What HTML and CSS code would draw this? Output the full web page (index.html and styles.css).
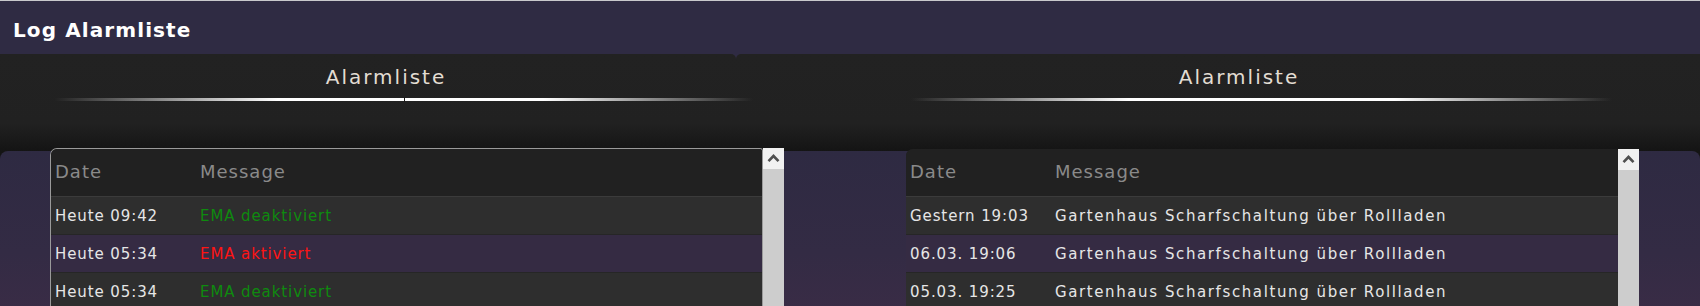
FILE: index.html
```html
<!DOCTYPE html>
<html lang="de">
<head>
<meta charset="utf-8">
<title>Log Alarmliste</title>
<link rel="stylesheet" href="styles.css">
</head>
<body>
<div class="page">
  <header class="topbar"><h1>Log Alarmliste</h1></header>
  <div class="heads">
    <section class="head head-left">
      <h2>Alarmliste</h2>
      <div class="rule rule-left"></div>
    </section>
    <section class="head head-right">
      <h2>Alarmliste</h2>
      <div class="rule rule-right"></div>
    </section>
  </div>
  <div class="lists-wrap">
    <div class="lists">
      <div class="list list-left">
        <div class="table table-bordered">
          <div class="row row-head"><div class="cell">Date</div><div class="cell">Message</div></div>
          <div class="row row-odd"><div class="cell">Heute 09:42</div><div class="cell ok">EMA deaktiviert</div></div>
          <div class="row row-even"><div class="cell">Heute 05:34</div><div class="cell alarm">EMA aktiviert</div></div>
          <div class="row row-odd"><div class="cell">Heute 05:34</div><div class="cell ok">EMA deaktiviert</div></div>
        </div>
        <div class="scroll">
          <div class="scroll-up">
            <svg width="21" height="21" viewBox="0 0 21 21"><polyline points="5.5,13.2 10.5,8 15.5,13.2" fill="none" stroke="#505050" stroke-width="2.6"/></svg>
          </div>
        </div>
      </div>
      <div class="list list-right">
        <div class="table">
          <div class="row row-head"><div class="cell">Date</div><div class="cell">Message</div></div>
          <div class="row row-odd"><div class="cell">Gestern 19:03</div><div class="cell msg">Gartenhaus Scharfschaltung über Rollladen</div></div>
          <div class="row row-even"><div class="cell">06.03. 19:06</div><div class="cell msg">Gartenhaus Scharfschaltung über Rollladen</div></div>
          <div class="row row-odd"><div class="cell">05.03. 19:25</div><div class="cell msg">Gartenhaus Scharfschaltung über Rollladen</div></div>
        </div>
        <div class="scroll">
          <div class="scroll-up">
            <svg width="21" height="21" viewBox="0 0 21 21"><polyline points="5.5,13.2 10.5,8 15.5,13.2" fill="none" stroke="#505050" stroke-width="2.6"/></svg>
          </div>
        </div>
      </div>
    </div>
  </div>
</div>
</body>
</html>
```
FILE: styles.css
```css
html, body {
  margin: 0;
  padding: 0;
}
body {
  width: 1700px;
  height: 306px;
  overflow: hidden;
  background: #2f2b43;
  font-family: "DejaVu Sans", Verdana, sans-serif;
}
.page {
  border-top: 1px solid #c9c9cc;
  height: 305px;
  display: flex;
  flex-direction: column;
}
.topbar {
  flex: 0 0 53px;
  height: 53px;
  background: #2f2b43;
  box-sizing: border-box;
  padding: 6px 0 0 13px;
}
.topbar h1 {
  margin: 0;
  font-size: 20px;
  line-height: 47px;
  font-weight: bold;
  color: #ffffff;
  letter-spacing: 1.1px;
}
.heads {
  display: flex;
  flex: 0 0 97px;
  height: 97px;
}
.head {
  background: linear-gradient(to bottom, #222222 0%, #212121 72%, #141414 100%);
  box-sizing: border-box;
  padding-top: 11px;
}
.head-left {
  width: 736px;
  border-radius: 0 5px 0 0;
  padding-left: 36px;
}
.head-right {
  flex: 1;
  border-radius: 5px 0 0 0;
  padding-left: 42px;
}
.head h2 {
  margin: 0;
  font-size: 20px;
  line-height: 24px;
  font-weight: normal;
  letter-spacing: 2px;
  color: #e3ddd3;
  text-align: center;
}
.rule {
  height: 3px;
  margin-top: 9px;
  position: relative;
}
.rule-left {
  margin-left: 18px;
  width: 699px;
  background: linear-gradient(to right, rgba(255,255,255,0) 0%, #ffffff 32%, #ffffff 70%, rgba(255,255,255,0) 100%);
}
.rule-left::after {
  content: "";
  position: absolute;
  left: 350px;
  top: -1px;
  width: 1px;
  height: 5px;
  background: #1a1a1a;
}
.rule-right {
  margin-left: 133px;
  width: 701px;
  background: linear-gradient(to right, rgba(255,255,255,0) 0%, #ffffff 31%, #ffffff 69%, rgba(255,255,255,0) 100%);
}
.lists-wrap {
  flex: 1 1 auto;
  min-height: 0;
  background: #141414;
  display: flex;
  flex-direction: column;
}
.lists {
  flex: 1;
  border-radius: 8px 8px 0 0;
  background: linear-gradient(to bottom, #2e2a42 0%, #332b44 60%, #3a2c46 100%);
  display: flex;
  padding-left: 50px;
  align-items: flex-start;
}
.list {
  display: flex;
  align-items: stretch;
  height: 170px;
  flex-shrink: 0;
}
.list-left {
  margin-top: -3px;
}
.list-right {
  margin-top: -2px;
  margin-left: 122px;
}
.table {
  background: #212121;
  overflow: hidden;
  border-radius: 7px 3px 0 0;
}
.table-bordered {
  width: 713px;
  box-sizing: border-box;
  border: 1px solid #9a9a9a;
  border-bottom: none;
}
.list-right .table {
  width: 712px;
}
.row {
  display: grid;
  grid-template-columns: 145px 1fr;
  align-items: center;
}
.cell {
  padding-left: 4px;
  white-space: nowrap;
}
.row-head {
  height: 48px;
  box-sizing: border-box;
  padding-bottom: 3px;
  border-bottom: 1px solid #3b3b3b;
  background: #212121;
  font-size: 18px;
  color: #8a8a8a;
  letter-spacing: 1px;
}
.row-odd, .row-even {
  height: 37px;
  border-bottom: 1px solid #262626;
  font-size: 15px;
  color: #e6e6e6;
  letter-spacing: 0.9px;
}
.row-odd {
  background: #2e2e2e;
}
.row-even {
  background: #352b43;
}
.msg {
  letter-spacing: 1.6px;
}
.ok {
  color: #0f8a0f;
}
.alarm {
  color: #ff1414;
}
.scroll {
  width: 21px;
  background: #cdcdcd;
}
.scroll-up {
  height: 21px;
  background: #f1f1f1;
}
.scroll-up svg {
  display: block;
}
```
